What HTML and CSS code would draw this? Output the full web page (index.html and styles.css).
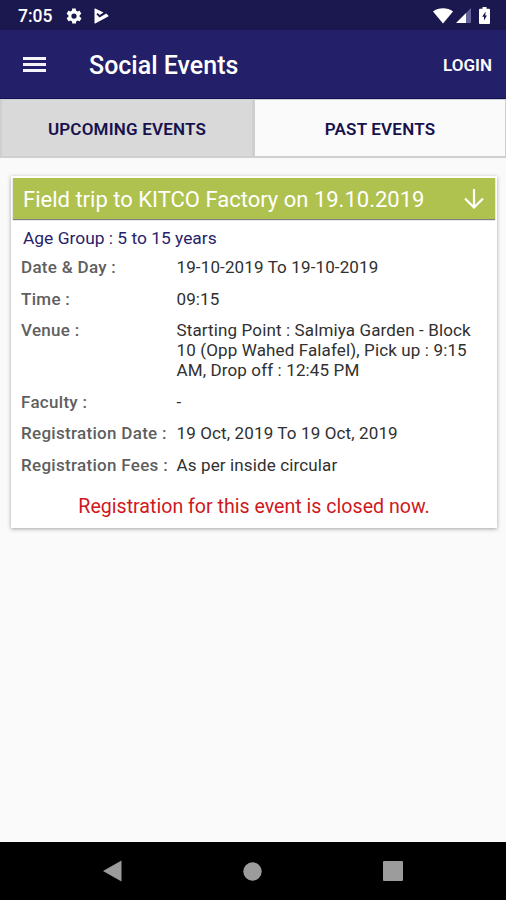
FILE: index.html
```html
<!DOCTYPE html>
<html lang="en">
<head>
  <meta charset="UTF-8">
  <title>Social Events</title>
  <meta name="viewport" content="width=device-width, initial-scale=1.0">
  <link rel="stylesheet" href="styles.css">
</head>
<body>

  <!-- Status bar -->
  <div class="status-bar">
    <span class="clock">7:05</span>
    <svg class="icon-gear" width="18" height="18" viewBox="0 0 24 24"><path fill="#fff" fill-rule="evenodd" d="M19.4 13c0-.3.1-.6.1-1s0-.7-.1-1l2.1-1.6c.2-.2.2-.4.1-.6l-2-3.5c-.1-.2-.4-.3-.6-.2l-2.500 1c-.5-.4-1.100-.7-1.700-1l-.4-2.600c0-.3-.2-.5-.4-.5h-4c-.3 0-.5.2-.5.4l-.4 2.700c-.6.2-1.100.6-1.700 1l-2.500-1c-.2-.1-.5 0-.6.2l-2 3.500c-.1.2-.1.400.1.600L4.600 11c0 .3-.1.700-.1 1s0 .7.1 1l-2.100 1.600c-.2.200-.2.400-.1.600l2 3.500c.1.200.4.300.6.200l2.500-1c.5.400 1.100.7 1.700 1l.4 2.700c0 .2.200.400.500.400h4c.2 0 .5-.2.500-.4l.4-2.700c.6-.2 1.100-.6 1.700-1l2.500 1c.2.100.5 0 .6-.2l2-3.500c.1-.2.100-.4-.1-.6L19.400 13zM12 15.500a3.500 3.500 0 1 1 0-7 3.500 3.500 0 0 1 0 7z"/></svg>
    <svg class="icon-play" width="15" height="16" viewBox="0 0 15 16"><path fill="#fff" d="M.5 1Q.5.300 1.200.600L9.500 4.600 5.700 7.100 3.700 5.100 2.400 6.300 5.500 9.600 12.300 5.600 14.500 7.700Q14.700 8.200 14.200 8.500L1.200 15.400Q.5 15.700.5 15z"/></svg>
    <div class="status-right">
      <svg width="20" height="16" viewBox="0 0 20 16"><path fill="#fff" d="M0 3.500C5.500-.8 14.500-.8 20 3.500L10 15.500z"/></svg>
      <svg class="icon-signal" width="15" height="15" viewBox="0 0 15 15"><path fill="#fff" d="M0 15L10 5V15z"/><path fill="#63619a" d="M10 5L15 0V15H10z"/></svg>
      <svg class="icon-battery" width="11" height="17" viewBox="0 0 11 17"><path fill="#fff" d="M3.500 0h4v1.700H10q1 0 1 1V16q0 1-1 1H1q-1 0-1-1V2.700q0-1 1-1h2.500z"/><path fill="#1b184f" d="M6.600 4.500L3.100 9.700H5V13.500L7.900 8.500H6.200z"/></svg>
    </div>
  </div>

  <header class="toolbar">
    <div class="menu"><span></span><span></span><span></span></div>
    <h1>Social Events</h1>
    <a class="login">LOGIN</a>
  </header>

  <nav class="tabs">
    <div class="tab selected">UPCOMING EVENTS</div>
    <div class="tab">PAST EVENTS</div>
  </nav>

  <main>
    <div class="card">
      <div class="card-title">
        <span>Field trip to KITCO Factory on 19.10.2019</span>
        <svg width="20" height="20" viewBox="0 0 20 20"><path fill="none" stroke="#fff" stroke-width="2.200" d="M10 0V18M1 9.500L10 18.500 19 9.500"/></svg>
      </div>
      <div class="age">Age Group : 5 to 15 years</div>
      <dl class="details">
        <dt>Date &amp; Day :</dt><dd>19-10-2019 To 19-10-2019</dd>
        <dt>Time :</dt><dd>09:15</dd>
        <dt>Venue :</dt><dd>Starting Point : Salmiya Garden - Block<br>10 (Opp Wahed Falafel), Pick up : 9:15<br>AM, Drop off : 12:45 PM</dd>
        <dt>Faculty :</dt><dd>-</dd>
        <dt>Registration Date :</dt><dd>19 Oct, 2019 To 19 Oct, 2019</dd>
        <dt>Registration Fees :</dt><dd>As per inside circular</dd>
      </dl>
      <p class="closed">Registration for this event is closed now.</p>
    </div>
  </main>

  <!-- Android navigation -->
  <div class="nav-bar">
    <svg width="19" height="22" viewBox="0 0 19 22"><path fill="#9c9c9c" d="M0 11L18.500.5V21.500z"/></svg>
    <svg width="19" height="19" viewBox="0 0 19 19"><circle cx="9.500" cy="9.500" r="9.200" fill="#9c9c9c"/></svg>
    <svg width="20" height="20" viewBox="0 0 20 20"><rect width="20" height="20" rx="1" fill="#9c9c9c"/></svg>
  </div>

</body>
</html>
```
FILE: styles.css
```css
* {
  box-sizing: border-box;
}

body {
  margin: 0;
  height: 900px;
  display: flex;
  flex-direction: column;
  background: #fafafa;
  font-family: Roboto, sans-serif;
  overflow: hidden;
}

svg {
  display: block;
  flex: none;
}

.status-bar {
  height: 30px;
  flex: none;
  display: flex;
  align-items: center;
  padding: 1px 16px 0 18px;
  background: #1b184f;
  color: #fff;
}

.clock {
  width: 47px;
  font-size: 17.5px;
  font-weight: 500;
}

.icon-play {
  margin-left: 11px;
}

.status-right {
  display: flex;
  align-items: center;
  margin-left: auto;
}

.icon-signal {
  margin-left: 3px;
}

.icon-battery {
  margin-left: 8px;
}

.toolbar {
  height: 69px;
  flex: none;
  display: flex;
  align-items: center;
  padding: 1px 14px 0 23px;
  background: #231f69;
  border-bottom: 1px solid #120e58;
  color: #fff;
}

.menu {
  display: flex;
  flex-direction: column;
  gap: 3px;
  width: 23px;
}

.menu span {
  height: 3px;
  background: #f4f4fa;
}

.toolbar h1 {
  margin: 1px 0 0 43px;
  font-size: 25px;
  font-weight: 500;
}

.login {
  margin-left: auto;
  font-size: 17px;
  font-weight: 600;
}

.tabs {
  display: flex;
  height: 59px;
  flex: none;
}

.tab {
  flex: 1;
  display: flex;
  align-items: center;
  justify-content: center;
  padding-top: 2px;
  border: 2px solid #cfcfcf;
  border-top-width: 1px;
  border-right-width: 1px;
  color: #17124d;
  font-size: 17px;
  font-weight: 600;
  letter-spacing: 0.2px;
}

.tab.selected {
  background: #d8d9d8;
}

main {
  flex: 1;
  padding: 18px 9px 0 11px;
}

.card {
  height: 352px;
  padding: 2px;
  background: #fff;
  box-shadow: 0 1px 4px rgba(0, 0, 0, 0.35);
}

.card-title {
  display: flex;
  align-items: center;
  justify-content: space-between;
  height: 41px;
  padding: 1px 11px 0 10px;
  background: #afc24f;
  box-shadow: 0 1px 1px rgba(0, 0, 0, 0.5);
  color: #fff;
  font-size: 22px;
  white-space: nowrap;
}

.age {
  margin: 8px 0 0 10px;
  line-height: 22px;
  font-size: 17.4px;
  color: #28226b;
}

.details {
  display: grid;
  grid-template-columns: 155.5px 1fr;
  row-gap: 11.5px;
  margin: 8px 0 0 8px;
  font-size: 17px;
  line-height: 20px;
}

.details dt {
  color: #5f5f5f;
  font-weight: 500;
  letter-spacing: 0.3px;
  white-space: nowrap;
}

.details dd {
  margin: 0;
  color: #303030;
  letter-spacing: 0.13px;
  white-space: nowrap;
}

.closed {
  margin: 20px 0 0;
  text-align: center;
  color: #cf1820;
  font-size: 19.6px;
  line-height: 24px;
}

.nav-bar {
  display: flex;
  align-items: center;
  justify-content: space-between;
  height: 58px;
  flex: none;
  padding: 0 103px;
  background: #000;
}
```
